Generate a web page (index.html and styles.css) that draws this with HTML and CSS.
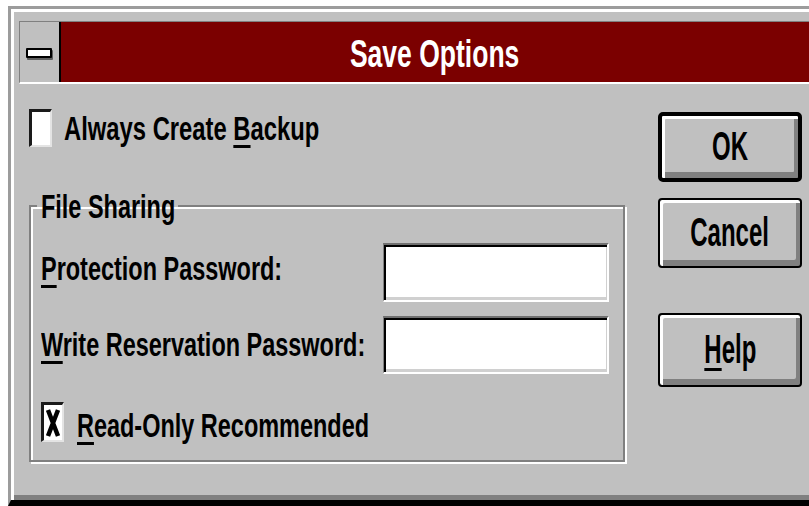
FILE: index.html
```html
<!DOCTYPE html>
<html lang="en">
<head>
<meta charset="utf-8">
<title>Save Options</title>
<link rel="stylesheet" href="styles.css">
</head>
<body>
<div class="window">
  <div class="titlebar">
    <div class="sysmenu"><span class="sysbar"></span></div>
    <div class="caption"><span class="t tc title-text">Save Options</span></div>
  </div>
  <div class="client">
    <div class="main">
      <div class="check backup">
        <span class="box"></span>
        <span class="t backup-text">Always Create <u>B</u>ackup</span>
      </div>
      <fieldset class="group">
        <legend><span class="t">File Sharing</span></legend>
        <div class="field-row first">
          <span class="t label"><u>P</u>rotection Password:</span>
          <span class="input"></span>
        </div>
        <div class="field-row second">
          <span class="t label"><u>W</u>rite Reservation Password:</span>
          <span class="input"></span>
        </div>
        <div class="check readonly">
          <span class="box">
            <svg class="xmark" viewBox="0 0 16 30" width="16" height="30" aria-hidden="true">
              <path d="M3 2 L13 28 M13 2 L3 28" stroke="#000" stroke-width="4.5" fill="none"/>
            </svg>
          </span>
          <span class="t"><u>R</u>ead-Only Recommended</span>
        </div>
      </fieldset>
    </div>
    <div class="buttons">
      <div class="btn default"><span class="t tc bt">OK</span></div>
      <div class="btn cancel"><span class="t tc bt">Cancel</span></div>
      <div class="btn help"><span class="t tc bt"><u>H</u>elp</span></div>
    </div>
  </div>
</div>
</body>
</html>
```

FILE: styles.css
```css
html, body {
  margin: 0;
  overflow: hidden;
  background: #fff;
}

body {
  padding: 6px 0 0 8px;
  width: 809px;
  height: 506px;
  box-sizing: border-box;
}

/* dialog window with thick frame; right side runs past the viewport */
.window {
  width: 840px;
  height: 500px;
  box-sizing: border-box;
  background: #c0c0c0;
  border-top: 3px solid #9c9c9c;
  border-left: 3px solid #9c9c9c;
  border-bottom: 6px solid #000;
  box-shadow: inset 3px 3px 0 #fff, inset 0 -5px 0 #808080;
}

/* shared text look: tall, narrow system lettering */
.t {
  display: inline-block;
  white-space: nowrap;
  font-family: "Liberation Sans", Arial, sans-serif;
  font-weight: bold;
  font-size: 34px;
  line-height: 34px;
  color: #000;
  transform: scaleX(0.69);
  transform-origin: 0 50%;
}

.t.tc {
  transform-origin: 50% 50%;
}

.t u {
  text-decoration-thickness: 3px;
  text-underline-offset: 5px;
}

/* title bar */
.titlebar {
  display: flex;
  width: 790px;
  height: 63px;
  box-sizing: border-box;
  margin: 12px 0 0 8px;
  border-top: 1px solid #808080;
  border-left: 1px solid #808080;
  border-bottom: 2px solid #fff;
}

.sysmenu {
  width: 37px;
  flex: none;
  background: #c0c0c0;
  border-right: 2px solid #000;
  display: flex;
  align-items: center;
  justify-content: center;
  padding-right: 2px;
}

.sysbar {
  display: block;
  width: 22px;
  height: 6px;
  background: #fff;
  border: 2px solid #000;
  border-radius: 1px;
  box-shadow: 1px 2px 0 #606060;
  margin-top: 2px;
}

.caption {
  flex: 1;
  background: #7b0000;
  display: flex;
  align-items: center;
  justify-content: center;
}

.title-text {
  color: #fff;
  font-size: 39px;
  line-height: 39px;
  transform: scaleX(0.68);
  margin-top: 2px;
}

/* client area */
.client {
  display: flex;
  align-items: flex-start;
  padding-left: 18px;
}

.main {
  width: 598px;
  flex: none;
}

.check {
  display: flex;
  align-items: flex-start;
}

.box {
  width: 23px;
  height: 38px;
  flex: none;
  box-sizing: border-box;
  background: #fff;
  border-top: 3px solid #1a1a1a;
  border-left: 3px solid #1a1a1a;
  border-right: 2px solid #e4e4e4;
  border-bottom: 2px solid #e4e4e4;
  display: flex;
  align-items: center;
  justify-content: center;
}

.backup {
  margin-top: 25px;
}

.backup .t {
  margin: 2px 0 0 12px;
  transform: scaleX(0.70);
}

/* etched group box */
.group {
  margin: 42px 0 0 0;
  width: 596px;
  box-sizing: border-box;
  min-width: 0;
  padding: 20px 0 18px 10px;
  border: 2px solid #808080;
  box-shadow: 2px 2px 0 #fff, inset 2px 2px 0 #fff;
}

.group legend {
  width: 141px;
  box-sizing: border-box;
  padding: 0 0 0 4px;
  margin-left: -4px;
  height: 34px;
}

.field-row {
  display: grid;
  grid-template-columns: 342px 226px;
  align-items: start;
}

.field-row.second {
  margin-top: 14px;
}

.field-row.first .label {
  margin-top: 8px;
}

.field-row.second .label {
  margin-top: 11px;
}

.input {
  display: block;
  height: 59px;
  box-sizing: border-box;
  background: #fff;
  border-top: 2px solid #707070;
  border-left: 1px solid #808080;
  border-bottom: 2px solid #fff;
  border-right: 2px solid #fff;
  box-shadow: inset 2px 2px 0 #000, inset -1px -3px 0 #d0d0d0;
}

.field-row.second .input {
  height: 58px;
}

.readonly {
  margin-top: 28px;
}

.readonly .box {
  height: 40px;
  padding: 0 1px 0 0;
}

.xmark {
  display: block;
  width: 16px;
  height: 30px;
}

.readonly .t {
  margin: 6px 0 0 13px;
}

/* push buttons */
.buttons {
  margin: 28px 0 0 31px;
  width: 144px;
  flex: none;
  display: flex;
  flex-direction: column;
}

.btn {
  height: 70px;
  box-sizing: border-box;
  border: 2px solid #000;
  border-radius: 4px;
  background: #c0c0c0;
  box-shadow: inset 3px 3px 0 #fff, inset -4px -6px 0 #808080;
  display: flex;
  align-items: center;
  justify-content: center;
  padding-bottom: 2px;
}

.btn.default {
  border-width: 4px;
  border-radius: 5px;
}

.btn.cancel {
  margin-top: 16px;
}

.btn.help {
  margin-top: 45px;
  height: 74px;
}

.bt {
  font-size: 40px;
  line-height: 40px;
  transform: scaleX(0.6);
}
```
